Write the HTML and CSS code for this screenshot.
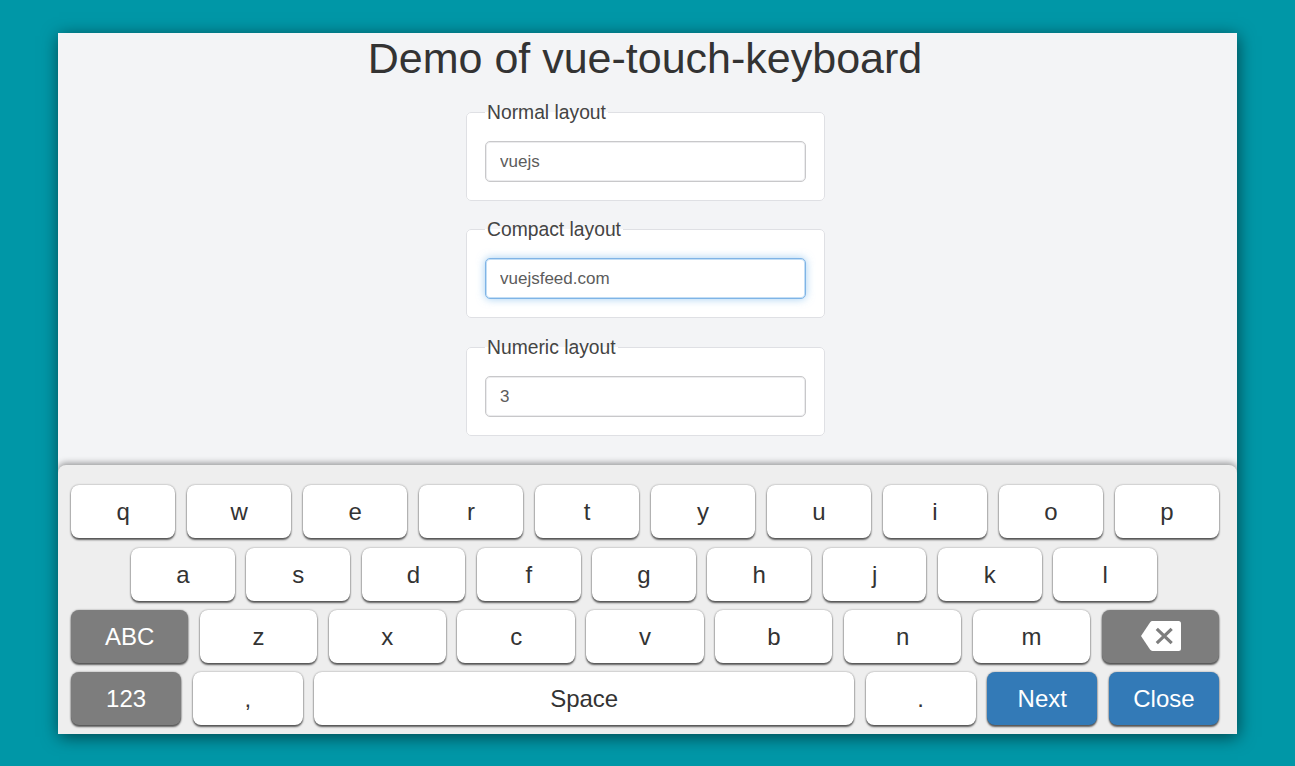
FILE: index.html
```
<!DOCTYPE html>
<html lang="en">
<head>
<meta charset="utf-8">
<title>Demo of vue-touch-keyboard</title>
<link rel="stylesheet" href="styles.css">
</head>
<body>
<main class="panel">
  <section class="demo">
    <h1 class="title">Demo of vue-touch-keyboard</h1>
    <form class="fields">
      <fieldset class="group"><legend class="legend">Normal layout</legend><input class="input" type="text" value="vuejs"></fieldset>
      <fieldset class="group"><legend class="legend">Compact layout</legend><input class="input input-active" type="text" value="vuejsfeed.com"></fieldset>
      <fieldset class="group"><legend class="legend">Numeric layout</legend><input class="input" type="text" value="3"></fieldset>
    </form>
  </section>
  <section class="keyboard">
    <div class="row">
      <div class="key">q</div><div class="key">w</div><div class="key">e</div><div class="key">r</div><div class="key">t</div><div class="key">y</div><div class="key">u</div><div class="key">i</div><div class="key">o</div><div class="key">p</div>
    </div>
    <div class="row row-inset">
      <div class="key">a</div><div class="key">s</div><div class="key">d</div><div class="key">f</div><div class="key">g</div><div class="key">h</div><div class="key">j</div><div class="key">k</div><div class="key">l</div>
    </div>
    <div class="row">
      <div class="key key-control">ABC</div><div class="key">z</div><div class="key">x</div><div class="key">c</div><div class="key">v</div><div class="key">b</div><div class="key">n</div><div class="key">m</div>
      <div class="key key-control" aria-label="Backspace"><svg class="backspace" viewBox="0 0 40 30"><path fill="#fff" d="M11.500 0H37.500Q40 0 40 2.500V27.500Q40 30 37.500 30H11.500Q10 30 9 28.600L0 15L9 1.400Q10 0 11.500 0Z"/><path fill="none" stroke="#7d7d7d" stroke-width="3.200" d="M15.800 7.800L30.700 22.200M30.700 7.800L15.800 22.200"/></svg></div>
    </div>
    <div class="row">
      <div class="key key-control">123</div><div class="key">,</div><div class="key key-space">Space</div><div class="key">.</div><div class="key key-primary">Next</div><div class="key key-primary">Close</div>
    </div>
  </section>
</main>
</body>
</html>
```
FILE: styles.css
```
* { box-sizing: border-box; }
body {
  margin: 0;
  height: 766px;
  padding: 33px 58px 32px;
  background: #0097a7;
  font-family: "Liberation Sans", Arial, sans-serif;
  overflow: hidden;
}
.panel {
  display: flex;
  flex-direction: column;
  height: 701px;
  background: #f3f4f6;
  box-shadow: 1px 3px 16px rgba(0, 0, 0, .55);
}
.demo {
  flex: 0 0 432px;
  overflow: hidden;
  display: flex;
  flex-direction: column;
  align-items: center;
  padding-right: 5px;
}
.title {
  margin: 0 0 17.5px;
  font-size: 43px;
  font-weight: 400;
  line-height: 51px;
  color: #333;
}
.fields { width: 359px; }
.group {
  min-width: 0;
  margin: 0 0 18.5px;
  padding: 18px 18px 18px;
  border: 1px solid #dfe0e4;
  border-radius: 5px;
  background: #fff;
}
.legend {
  padding: 0 2.5px;
  font-size: 19.3px;
  line-height: 21px;
  color: #444;
}
.input {
  display: block;
  width: 100%;
  height: 41px;
  padding: 1px 14.5px 0;
  border: 1px solid #c8c8ca;
  border-radius: 5px;
  background: #fff;
  box-shadow: inset 0 0 0 1px #ececee;
  font: 17px "Liberation Sans", Arial, sans-serif;
  color: #5c5c5c;
  outline: none;
}
.input-active {
  border-color: #7fb4e6;
  box-shadow: 0 0 8px rgba(102, 175, 233, .6), inset 0 0 0 1px #c3def5;
}
.keyboard {
  position: relative;
  flex: 1;
  display: flex;
  flex-direction: column;
  gap: 9.2px;
  padding: 20.4px 18px 0 13px;
  background: #eee;
  border-radius: 8px 8px 0 0;
  box-shadow: 0 -2px 6px rgba(0, 0, 0, .38);
  clip-path: inset(-15px 0 0 0);
}
.row { display: flex; gap: 11.5px; }
.row-inset { padding: 0 62px 0 60px; }
.key {
  flex: 1 1 0;
  min-width: 0;
  height: 53px;
  padding-top: 1px;
  display: flex;
  align-items: center;
  justify-content: center;
  border-radius: 8px;
  background: #fff;
  box-shadow: 0 2px 2px rgba(0, 0, 0, .6), 0 0 2px rgba(0, 0, 0, .4);
  font-size: 24px;
  color: #333;
}
.key-space { flex-grow: 4.9; }
.key-control { background: #7d7d7d; color: #fff; }
.key-primary { background: #337ab7; color: #fff; }
.backspace { width: 40px; height: 30px; margin: -1px 0 0 2px; }
```
